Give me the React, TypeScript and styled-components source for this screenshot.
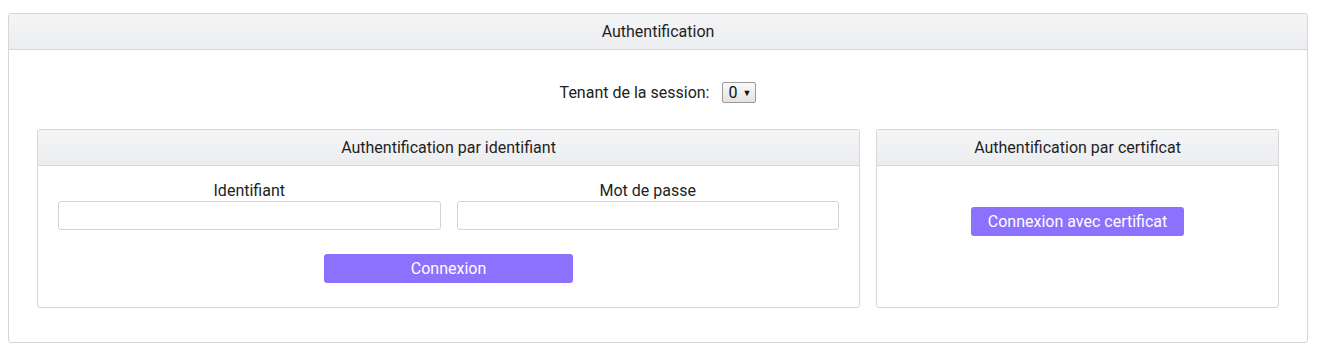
import styled, { createGlobalStyle } from "styled-components";

const GlobalStyle = createGlobalStyle`
  body {
    margin: 0;
    padding: 13px 8px 0 8px;
    background: #fff;
    font-family: Roboto, "Liberation Sans", Arial, sans-serif;
    font-size: 16px;
    color: #222;
  }
  * { box-sizing: border-box; }
`;

const Panel = styled.section`
  border: 1px solid #d6d6d6;
  border-radius: 3px;
  background: #fff;
  overflow: hidden;
`;

const Outer = styled(Panel)`
  width: 1300px;
`;

const Header = styled.div`
  height: 36px;
  display: flex;
  align-items: center;
  justify-content: center;
  background: linear-gradient(to bottom, #f5f5f6, #ebedf0);
  border-bottom: 1px solid #d6d6d6;
  color: #1f1f1f;
`;

const OuterBody = styled.div`
  padding: 32px 28px 34px 28px;
`;

const TenantRow = styled.div`
  display: flex;
  justify-content: center;
  align-items: center;
  gap: 13px;
  margin-bottom: 26px;
`;

const Select = styled.div`
  display: flex;
  align-items: center;
  gap: 5px;
  height: 21px;
  padding: 0 4px 0 5px;
  border: 1px solid #9a9a9a;
  border-radius: 2px;
  background: linear-gradient(to bottom, #fafafa, #e3e3e3);
  font-size: 16px;
  color: #111;
`;

const Caret = styled.span`
  font-size: 9px;
`;

const Columns = styled.div`
  display: grid;
  grid-template-columns: 823px 403px;
  gap: 16px;
`;

const InnerPanel = styled(Panel)`
  height: 179px;
`;

const FieldsBody = styled.div`
  padding: 15px 20px 0 20px;
`;

const Fields = styled.div`
  display: grid;
  grid-template-columns: 1fr 1fr;
  gap: 16px;
`;

const Field = styled.label`
  display: flex;
  flex-direction: column;
  align-items: center;
  gap: 1px;
`;

const Input = styled.input`
  width: 100%;
  height: 29px;
  border: 1px solid #d3d3d3;
  border-radius: 3px;
  background: #fff;
`;

const ButtonRow = styled.div<{ $top: number }>`
  display: flex;
  justify-content: center;
  padding-top: ${(p) => p.$top}px;
`;

const Button = styled.button<{ $width?: number }>`
  height: 29px;
  width: ${(p) => (p.$width ? `${p.$width}px` : "auto")};
  padding: 0 17px;
  border: none;
  border-radius: 3px;
  background: #8c71ff;
  color: #fff;
  font-family: Roboto, "Liberation Sans", Arial, sans-serif;
  font-size: 16px;
`;

export default function App() {
  return (
    <>
      <GlobalStyle />
      <Outer>
        <Header>Authentification</Header>
        <OuterBody>
          <TenantRow>
            <span>Tenant de la session:</span>
            <Select>
              0<Caret>▼</Caret>
            </Select>
          </TenantRow>
          <Columns>
            <InnerPanel>
              <Header>Authentification par identifiant</Header>
              <FieldsBody>
                <Fields>
                  <Field>
                    Identifiant
                    <Input type="text" />
                  </Field>
                  <Field>
                    Mot de passe
                    <Input type="password" />
                  </Field>
                </Fields>
                <ButtonRow $top={24}>
                  <Button $width={249}>Connexion</Button>
                </ButtonRow>
              </FieldsBody>
            </InnerPanel>
            <InnerPanel>
              <Header>Authentification par certificat</Header>
              <ButtonRow $top={41}>
                <Button>Connexion avec certificat</Button>
              </ButtonRow>
            </InnerPanel>
          </Columns>
        </OuterBody>
      </Outer>
    </>
  );
}
